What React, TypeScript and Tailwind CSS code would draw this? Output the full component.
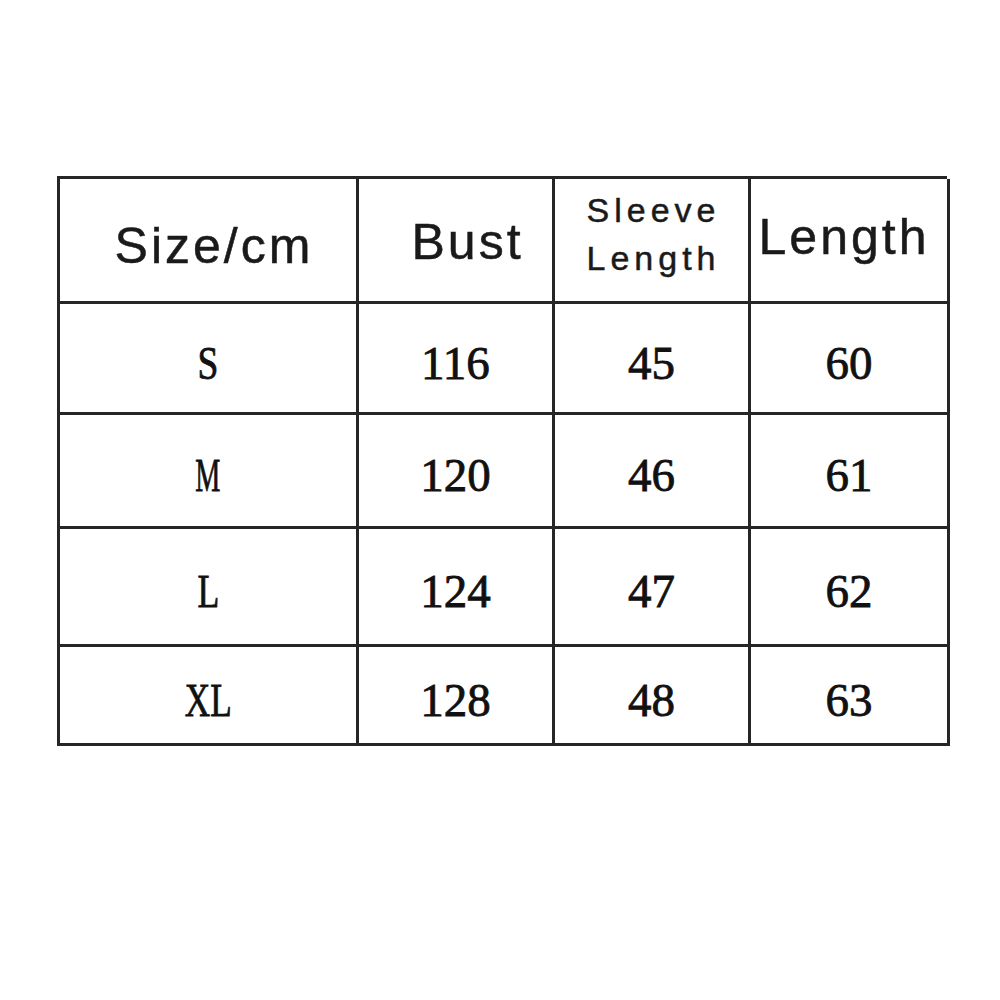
const rows = [
  ["S", "116", "45", "60"],
  ["M", "120", "46", "61"],
  ["L", "124", "47", "62"],
  ["XL", "128", "48", "63"],
];

const rowHeights = ["h-[111px]", "h-[114px]", "h-[118px]", "h-[99px]"];

// size letters in the source are a narrow face, the M especially
const squeeze: Record<string, string> = {
  S: "scale-x-[0.8]",
  M: "scale-x-[0.6]",
  L: "scale-x-[0.76]",
  XL: "scale-x-[0.75]",
};

export default function App() {
  return (
    <div className="w-[1000px] h-[1000px] bg-white pt-[176px] pl-[57px]">
      <div className="w-[890px] border-l-[3px] border-t-[3px] border-[#262626]">
        <div className="grid grid-cols-[299px_196px_196px_199px] h-[125px] font-['Liberation_Sans',sans-serif] text-[#1a1a1a] [-webkit-text-stroke:0.5px_#1a1a1a]">
          <div className="border-r-[3px] border-b-[3px] border-[#262626] flex items-center justify-center pl-[12px] pt-[12px] text-[50px] tracking-[3px]">
            Size/cm
          </div>
          <div className="border-r-[3px] border-b-[3px] border-[#262626] flex items-center justify-center pl-[24px] pt-[4px] text-[50px] tracking-[3px]">
            Bust
          </div>
          <div className="border-r-[3px] border-b-[3px] border-[#262626] flex flex-col items-center justify-center pl-[4px] pb-[12px] text-[34px] leading-[48px] tracking-[5px]">
            <span>Sleeve</span>
            <span>Length</span>
          </div>
          <div className="border-r-[3px] border-b-[3px] border-[#262626] flex items-center justify-center pr-[10px] pb-[6px] text-[50px] tracking-[3px]">
            Length
          </div>
        </div>
        {rows.map((r, i) => (
          <div
            key={r[0]}
            className={`grid grid-cols-[299px_196px_196px_199px] ${rowHeights[i]} font-['Liberation_Serif',serif] text-[47px] text-[#111] [-webkit-text-stroke:0.8px_#111]`}
          >
            {r.map((c, j) => (
              <div
                key={j}
                className="border-r-[3px] border-b-[3px] border-[#262626] flex items-center justify-center pt-[10px]"
              >
                {j === 0 ? <span className={`inline-block ${squeeze[c]}`}>{c}</span> : c}
              </div>
            ))}
          </div>
        ))}
      </div>
    </div>
  );
}
